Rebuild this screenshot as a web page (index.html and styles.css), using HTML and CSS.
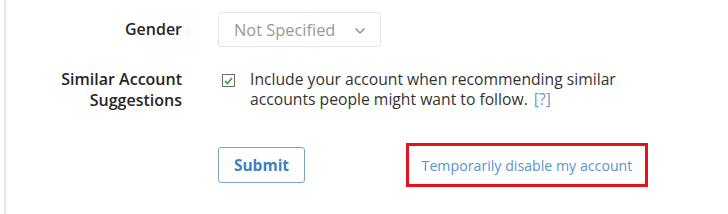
FILE: index.html
```html
<!DOCTYPE html>
<html lang="en">
<head>
    <meta charset="UTF-8">
    <title>Edit Profile</title>
    <link rel="stylesheet" href="styles.css">
</head>
<body>
    <div class="panel">
        <form class="profile-form">
            <!-- Gender -->
            <div class="row row-gender">
                <label class="label">Gender</label>
                <div class="field">
                    <div class="select">
                        <span class="select-value">Not Specified</span>
                        <svg class="chevron" width="12" height="8" viewBox="0 0 12 8"><path d="M1.5 1.5 L6 6 L10.5 1.5" fill="none" stroke="#8e8e8e" stroke-width="1.4"/></svg>
                    </div>
                </div>
            </div>

            <!-- Similar accounts -->
            <div class="row row-similar">
                <label class="label">Similar Account<br>Suggestions</label>
                <div class="field check-field">
                    <span class="checkbox">
                        <svg width="9" height="8" viewBox="0 0 9 8"><path d="M1 4 L3.4 6.4 L8 1.2" fill="none" stroke="#3cae3c" stroke-width="1.8"/></svg>
                    </span>
                    <p class="check-text">
                        <span class="line">Include your account when recommending similar</span>
                        <span class="line">accounts people might want to follow.<a href="#" class="help">[?]</a></span>
                    </p>
                </div>
            </div>

            <!-- Actions -->
            <div class="row row-actions">
                <span class="label"></span>
                <div class="field actions">
                    <button type="button" class="submit">Submit</button>
                    <div class="disable-box">
                        <a href="#" class="disable-link">Temporarily disable my account</a>
                    </div>
                </div>
            </div>
        </form>
    </div>
</body>
</html>
```

FILE: styles.css
```css
body {
    margin: 0;
    font-family: "Open Sans", Arial, sans-serif;
    background-color: #fff;
    color: #262626;
}
.panel {
    margin-left: 4px;
    border-left: 2px solid #e6e6e6;
    height: 214px;
    box-sizing: border-box;
}
.profile-form {
    display: flex;
    flex-direction: column;
}
.row {
    display: grid;
    grid-template-columns: 176px 1fr;
    column-gap: 36px;
    align-items: center;
}
.label {
    text-align: right;
    font-size: 16px;
    font-weight: 600;
    line-height: 21px;
    color: #262626;
}
.row-gender {
    padding-top: 12px;
}
.select {
    width: 163px;
    height: 35px;
    box-sizing: border-box;
    border: 1px solid #e3e3e3;
    border-radius: 3px;
    display: flex;
    align-items: center;
    justify-content: space-between;
    padding: 0 14px 0 15px;
}
.select-value {
    font-size: 16.4px;
    color: #999;
}
.chevron {
    margin-top: 2px;
}
.row-similar {
    margin-top: 22px;
    align-items: start;
}
.check-field {
    display: flex;
    align-items: flex-start;
    gap: 15px;
    padding-left: 4px;
}
.checkbox {
    width: 13px;
    height: 13px;
    box-sizing: border-box;
    border: 1px solid #6f6f6f;
    margin-top: 5px;
    display: flex;
    align-items: center;
    justify-content: center;
    flex-shrink: 0;
}
.check-text {
    margin: 0;
    display: flex;
    flex-direction: column;
    font-size: 15.7px;
    line-height: 20px;
    color: #333;
}
.check-text .line {
    display: block;
    white-space: nowrap;
}
.help {
    margin-left: 6px;
    color: #6b9bd1;
    text-decoration: none;
}
.row-actions {
    margin-top: 32px;
}
.actions {
    display: flex;
    align-items: center;
    gap: 101px;
}
.submit {
    width: 87px;
    height: 36px;
    border: 1px solid #7aa5cf;
    border-radius: 3px;
    background: #fff;
    color: #3f7fc0;
    font-family: "Open Sans", Arial, sans-serif;
    font-size: 15.5px;
    font-weight: 700;
    cursor: pointer;
}
.disable-box {
    border: 3px solid #e5121a;
    width: 242px;
    height: 44px;
    box-sizing: border-box;
    display: flex;
    align-items: center;
    justify-content: center;
}
.disable-link {
    color: #5c94cc;
    font-size: 14.2px;
    text-decoration: none;
}
```
